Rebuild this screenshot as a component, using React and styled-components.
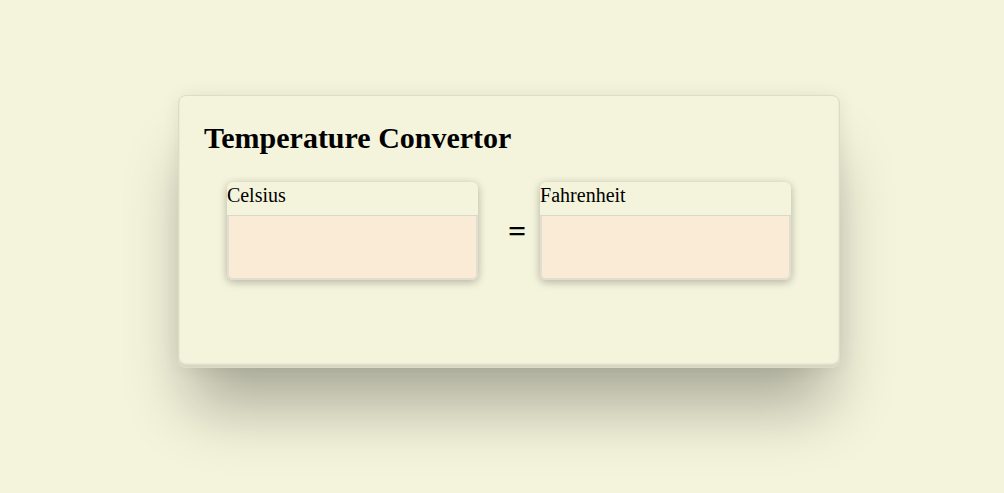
import React from "react";
import styled, { createGlobalStyle } from "styled-components";

const Global = createGlobalStyle`
  html, body { margin: 0; padding: 0; background: #f4f4dc; }
  body { font-family: "Liberation Serif", "Times New Roman", serif; color: #000; }
`;

const Page = styled.div`
  padding: 95px 0 0 178px;
  min-height: 493px;
  box-sizing: border-box;
`;

const Panel = styled.section`
  width: 662px;
  height: 273px;
  box-sizing: border-box;
  padding: 24px 25px;
  background: #f4f4dc;
  border: 1px solid #dcdcc8;
  border-radius: 8px;
  box-shadow:
    0 0 18px rgba(0, 0, 0, 0.07),
    0 50px 60px -12px rgba(0, 0, 0, 0.3),
    inset 0 -3px 2px rgba(0, 0, 0, 0.12);
`;

const Title = styled.h1`
  margin: 0;
  font-size: 30px;
  line-height: 36px;
  font-weight: bold;
`;

const Row = styled.div`
  display: flex;
  align-items: center;
  justify-content: center;
  margin-top: 26px;
`;

const Box = styled.label`
  display: flex;
  flex-direction: column;
  width: 251px;
  height: 98px;
  border-radius: 6px;
  overflow: hidden;
  background: #f4f4dc;
  box-shadow: 0 2px 8px rgba(0, 0, 0, 0.28);
`;

const Label = styled.span`
  font-size: 20px;
  line-height: 23px;
  height: 34px;
  padding-top: 2px;
  box-sizing: border-box;
  border-bottom: 1px solid #d8d8cc;
`;

const Field = styled.input`
  flex: 1;
  margin: 0;
  background: #faebd7;
  border: 2px solid #e2ddd0;
  border-top: none;
  border-radius: 0 0 6px 6px;
  font: inherit;
  font-size: 20px;
  outline: none;
`;

const Equals = styled.span`
  font-size: 32px;
  line-height: 32px;
  font-weight: bold;
  margin: 0 14px 0 30px;
`;

export default function App() {
  return (
    <>
      <Global />
      <Page>
        <Panel>
          <Title>Temperature Convertor</Title>
          <Row>
            <Box>
              <Label>Celsius</Label>
              <Field type="text" />
            </Box>
            <Equals>=</Equals>
            <Box>
              <Label>Fahrenheit</Label>
              <Field type="text" />
            </Box>
          </Row>
        </Panel>
      </Page>
    </>
  );
}
